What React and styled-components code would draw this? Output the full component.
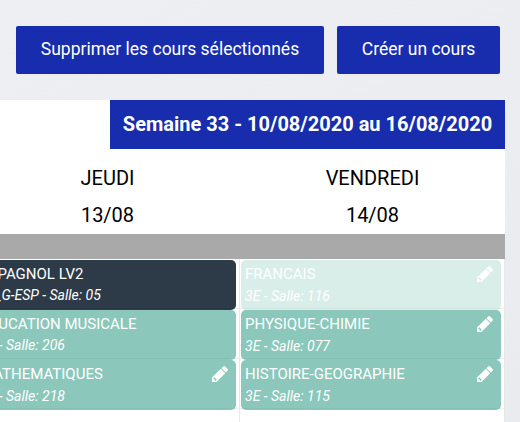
import React from "react";
import styled, { createGlobalStyle } from "styled-components";

const GlobalStyle = createGlobalStyle`
  * { box-sizing: border-box; }
  body {
    margin: 0;
    overflow: hidden;
    font-family: Roboto, sans-serif;
    background: #ecedf1;
  }
`;

const Page = styled.main`
  width: 520px;
  height: 422px;
  overflow: hidden;
  padding-right: 15px;
  background: linear-gradient(150deg, #eeeff2 0%, #ecedf1 50%, #eaebef 100%);
`;

const Toolbar = styled.div`
  display: flex;
  justify-content: flex-end;
  gap: 13px;
  height: 100px;
  padding: 26px 5px 0 0;
`;

const Button = styled.button`
  width: ${({ $width }) => $width}px;
  height: 48px;
  padding: 0 0 3px;
  border: 0;
  border-radius: 2px;
  background: #172dad;
  color: #fff;
  font: 400 17.5px/24px Roboto, sans-serif;
  white-space: nowrap;
`;

const Planning = styled.section`
  height: 322px;
  background: #fff;
`;

const WeekTitle = styled.h2`
  width: 395px;
  height: 49px;
  margin: 0 0 0 auto;
  background: #172dad;
  color: #fff;
  font-size: 20px;
  font-weight: 700;
  line-height: 49px;
  text-align: center;
  white-space: nowrap;
`;

const Days = styled.div`
  display: grid;
  grid-template-columns: 265px 265px;
  justify-content: end;
  height: 85px;
  padding-top: 11px;
`;

const Day = styled.div`
  font-size: 20px;
  line-height: 37px;
  text-align: center;
`;

const AllDayBar = styled.div`
  height: 25px;
  background: #a9a9a9;
`;

const Schedule = styled.div`
  display: grid;
  grid-template-columns: 265px 265px;
  justify-content: end;
  height: 163px;
  background: repeating-linear-gradient(to bottom, transparent 0 49px, #ededed 49px 50px);
`;

const Column = styled.div`
  padding: 1px 3px 0 1px;
  border-right: 1px solid #e8e8ea;
`;

const tones = { dark: "#2d3a47", pale: "#d9ede9", green: "#8bc8bb" };

const Course = styled.article`
  position: relative;
  height: 50px;
  padding: 4px;
  border-radius: 5px;
  background: linear-gradient(
      to bottom,
      transparent 48px,
      rgba(0, 0, 0, 0.04) 48px 49px,
      transparent 49px
    )
    ${({ $tone }) => tones[$tone]};
  color: #fff;
  white-space: nowrap;
`;

const Title = styled.div`
  font-size: 15px;
  line-height: 20px;
`;

const Details = styled.div`
  font-size: 14px;
  font-style: italic;
  line-height: ${({ $compact }) => ($compact ? 22 : 24)}px;
`;

const EditIcon = styled.svg`
  position: absolute;
  top: 6px;
  right: 8px;
  width: 16px;
  height: 16px;
  fill: currentColor;
`;

const Pencil = () => (
  <EditIcon viewBox="0 20 1516 1516" aria-hidden="true">
    <path d="M363 1408l91-91-235-235-91 91v107h128v128h107zM832 288l416 416-832 832H0v-416zM1515 384q0 53-37 90l-166 166-416-416 166-165q36-38 90-38 53 0 91 38l235 234q37 39 37 91z" />
  </EditIcon>
);

const days = [
  { name: "JEUDI", date: "13/08", courses: [
    { title: "ESPAGNOL LV2", details: "3E_G-ESP - Salle: 05", tone: "dark" },
    { title: "EDUCATION MUSICALE", details: "3E - Salle: 206", tone: "green" },
    { title: "MATHEMATIQUES", details: "3E - Salle: 218", tone: "green", editable: true },
  ] },
  { name: "VENDREDI", date: "14/08", courses: [
    { title: "FRANCAIS", details: "3E - Salle: 116", tone: "pale", editable: true },
    { title: "PHYSIQUE-CHIMIE", details: "3E - Salle: 077", tone: "green", editable: true },
    { title: "HISTOIRE-GEOGRAPHIE", details: "3E - Salle: 115", tone: "green", editable: true },
  ] },
];

export default function App() {
  return (
    <Page>
      <GlobalStyle />
      <Toolbar>
        <Button $width={308}>Supprimer les cours sélectionnés</Button>
        <Button $width={163}>Créer un cours</Button>
      </Toolbar>
      <Planning>
        <WeekTitle>Semaine 33 - 10/08/2020 au 16/08/2020</WeekTitle>
        <Days>
          {days.map((day) => (
            <Day key={day.name}>
              <div>{day.name}</div>
              <div>{day.date}</div>
            </Day>
          ))}
        </Days>
        <AllDayBar />
        <Schedule>
          {days.map((day) => (
            <Column key={day.name}>
              {day.courses.map((course) => (
                <Course key={course.title} $tone={course.tone}>
                  <Title>{course.title}</Title>
                  <Details $compact={!course.editable}>{course.details}</Details>
                  {course.editable && <Pencil />}
                </Course>
              ))}
            </Column>
          ))}
        </Schedule>
      </Planning>
    </Page>
  );
}
